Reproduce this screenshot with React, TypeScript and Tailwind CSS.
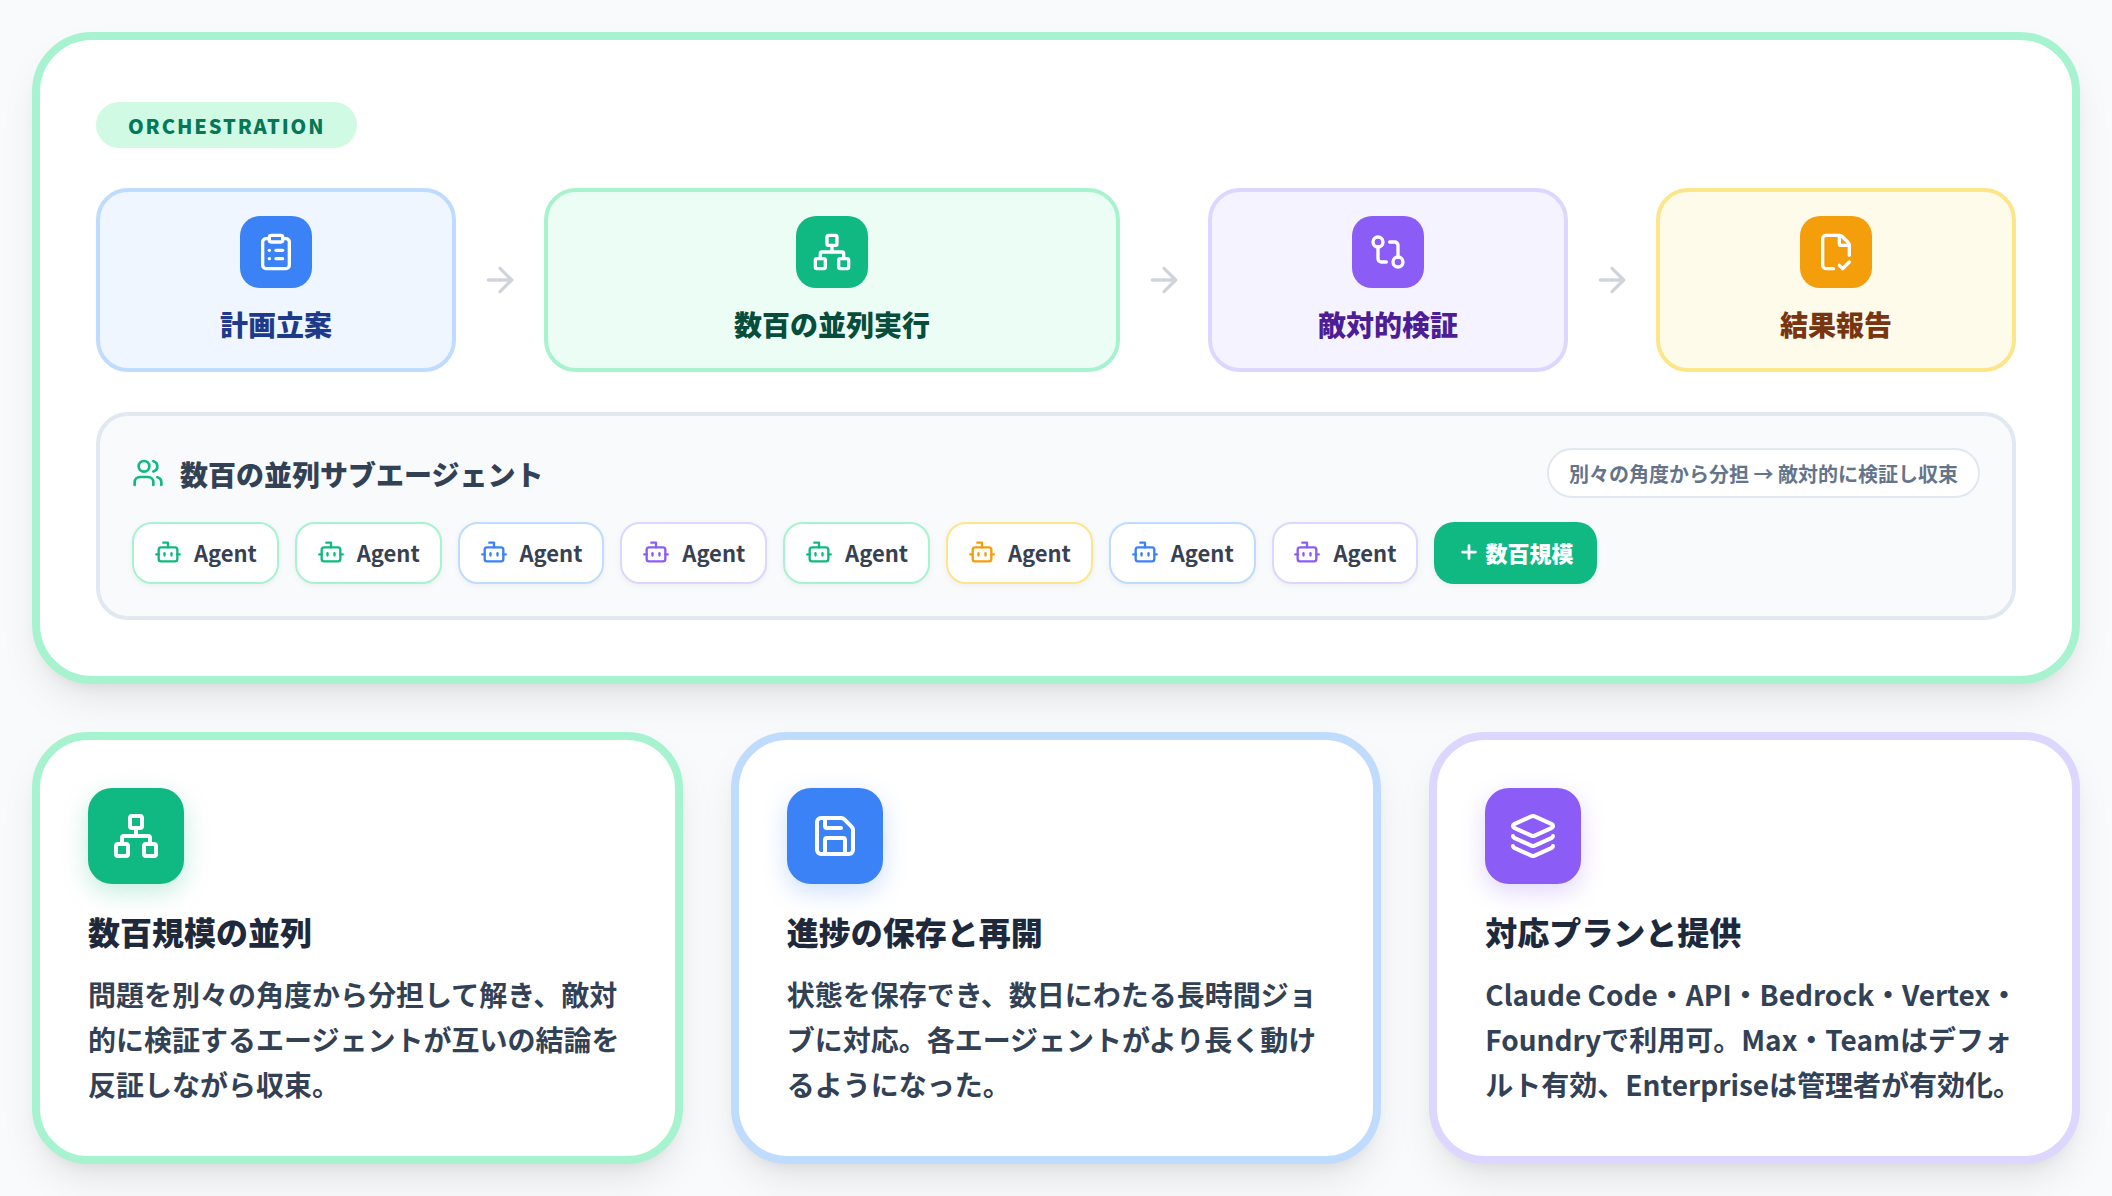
import { Fragment } from 'react';
import { ArrowRight, Bot, ClipboardList, FileCheckCorner, GitCompare, Layers, Network, Plus, Save, Users } from 'lucide-react';

const fontStack = { fontFamily: '"Noto Sans CJK JP", "Noto Sans", sans-serif' };

const steps = [
    { label: '計画立案', Icon: ClipboardList, box: 'border-[#bfdbfe] bg-[#eff6ff]', icon: 'bg-[#3b82f6]', text: 'text-[#1e3a8a]' },
    { label: '数百の並列実行', Icon: Network, box: 'border-[#a7f3d0] bg-[#ecfdf5]', icon: 'bg-[#10b981]', text: 'text-[#064e3b]' },
    { label: '敵対的検証', Icon: GitCompare, box: 'border-[#ddd6fe] bg-[#f5f3ff]', icon: 'bg-[#8b5cf6]', text: 'text-[#4c1d95]' },
    { label: '結果報告', Icon: FileCheckCorner, box: 'border-[#fde68a] bg-[#fffbeb]', icon: 'bg-[#f59e0b]', text: 'text-[#78350f]' },
];

const agentColors = {
    green: { chip: 'border-[#a7f3d0]', icon: 'text-[#10b981]' },
    blue: { chip: 'border-[#bfdbfe]', icon: 'text-[#3b82f6]' },
    purple: { chip: 'border-[#ddd6fe]', icon: 'text-[#8b5cf6]' },
    amber: { chip: 'border-[#fde68a]', icon: 'text-[#f59e0b]' },
};

const agents: (keyof typeof agentColors)[] = ['green', 'green', 'blue', 'purple', 'green', 'amber', 'blue', 'purple'];

const cards = [
    {
        title: '数百規模の並列',
        body: '問題を別々の角度から分担して解き、敵対的に検証するエージェントが互いの結論を反証しながら収束。',
        Icon: Network,
        border: 'border-[#a7f3d0]',
        icon: 'bg-[#10b981] shadow-[0_8px_24px_rgba(16,185,129,0.25)]',
    },
    {
        title: '進捗の保存と再開',
        body: '状態を保存でき、数日にわたる長時間ジョブに対応。各エージェントがより長く動けるようになった。',
        Icon: Save,
        border: 'border-[#bfdbfe]',
        icon: 'bg-[#3b82f6] shadow-[0_8px_24px_rgba(59,130,246,0.25)]',
    },
    {
        title: '対応プランと提供',
        body: 'Claude Code・API・Bedrock・Vertex・Foundryで利用可。Max・Teamはデフォルト有効、Enterpriseは管理者が有効化。',
        Icon: Layers,
        border: 'border-[#ddd6fe]',
        icon: 'bg-[#8b5cf6] shadow-[0_8px_24px_rgba(139,92,246,0.25)]',
    },
];

export default function App() {
    return (
        <div style={fontStack} className="flex h-[1196px] w-[2112px] flex-col gap-12 bg-[#f8fafc] p-8">
            {/* Orchestration panel */}
            <section className="h-[652px] rounded-[60px] border-8 border-[#a7f3d0] bg-white px-14 pt-[62px] shadow-[0_20px_40px_-8px_rgba(0,0,0,0.1),0_8px_16px_-8px_rgba(0,0,0,0.08)]">
                <div className="inline-flex h-[46px] items-center rounded-full bg-[#d1fae5] px-8 pt-[2px] text-[20px] font-black tracking-[1.9px] text-[#047857]">
                    ORCHESTRATION
                </div>

                <div className="mt-10 grid grid-cols-[1fr_88px_1.6fr_88px_1fr_88px_1fr] items-center">
                    {steps.map((step, i) => (
                        <Fragment key={step.label}>
                            {i > 0 && (
                                <div className="flex justify-center">
                                    <ArrowRight size={40} className="text-[#d1d5db]" />
                                </div>
                            )}
                            <div className={`flex h-[184px] flex-col items-center rounded-[32px] border-4 pt-6 ${step.box}`}>
                                <div className={`flex h-[72px] w-[72px] items-center justify-center rounded-[20px] text-white ${step.icon}`}>
                                    <step.Icon size={40} />
                                </div>
                                <div className={`mt-4 text-[28px] leading-[40px] font-black ${step.text}`}>{step.label}</div>
                            </div>
                        </Fragment>
                    ))}
                </div>

                {/* Subagents */}
                <div className="mt-10 h-[208px] rounded-[32px] border-4 border-[#e2e8f0] bg-[#f8fafc] px-8 pt-8">
                    <div className="flex h-[50px] items-center justify-between">
                        <div className="flex items-center gap-4">
                            <Users size={32} className="text-[#10b981]" />
                            <span className="pt-[2px] text-[28px] leading-[40px] font-black text-[#334155]">数百の並列サブエージェント</span>
                        </div>
                        <span className="rounded-full border-2 border-[#e2e8f0] bg-white px-5 pt-[9px] pb-[7px] text-[20px] leading-[30px] font-bold text-[#64748b]">
                            別々の角度から分担 → 敵対的に検証し収束
                        </span>
                    </div>
                    <div className="mt-6 flex gap-4">
                        {agents.map((color, i) => (
                            <div
                                key={i}
                                className={`flex h-[62px] w-[146.8px] items-center justify-center gap-3 rounded-[20px] border-2 bg-white pb-[2px] text-[22px] font-bold text-[#374151] shadow-[0_2px_6px_rgba(0,0,0,0.05)] ${agentColors[color].chip}`}
                            >
                                <Bot size={28} className={agentColors[color].icon} />
                                Agent
                            </div>
                        ))}
                        <div className="flex h-[62px] items-center gap-[5px] rounded-[20px] bg-[#10b981] px-6 pb-[2px] text-[22px] font-black text-white shadow-[0_2px_6px_rgba(0,0,0,0.05)]">
                            <Plus size={22} strokeWidth={3} />
                            数百規模
                        </div>
                    </div>
                </div>
            </section>

            {/* Feature cards */}
            <div className="grid h-[432px] grid-cols-3 gap-12">
                {cards.map((card) => (
                    <div key={card.title} className={`rounded-[56px] border-8 bg-white p-12 shadow-[0_20px_40px_-8px_rgba(0,0,0,0.1),0_8px_16px_-8px_rgba(0,0,0,0.08)] ${card.border}`}>
                        <div className={`flex h-24 w-24 items-center justify-center rounded-[24px] text-white ${card.icon}`}>
                            <card.Icon size={48} />
                        </div>
                        <h3 className="mt-[25px] text-[32px] leading-[44px] font-black text-[#1e293b]">{card.title}</h3>
                        <p className="mt-[19px] text-[28px] leading-[44.8px] font-bold text-[#334155]">{card.body}</p>
                    </div>
                ))}
            </div>
        </div>
    );
}
